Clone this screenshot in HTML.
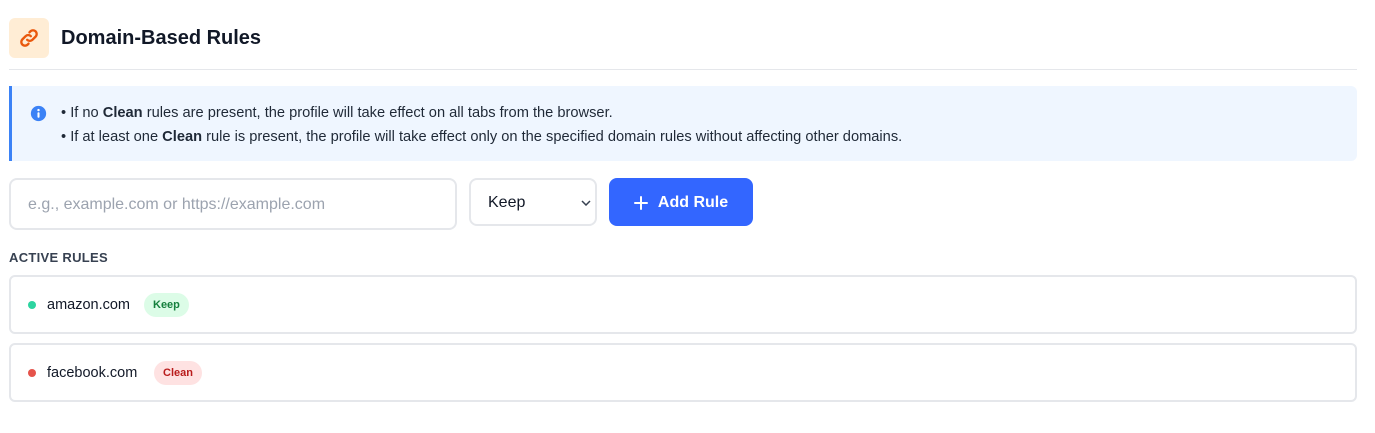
<!DOCTYPE html>
<html><head><style>
*{box-sizing:border-box;margin:0;padding:0}
body{width:1375px;height:433px;background:#fff;font-family:"Liberation Sans",sans-serif;color:#111827;position:relative;overflow:hidden}
.abs{position:absolute}
.icon{left:9px;top:18px;width:40px;height:40px;background:#ffedd5;border-radius:6px;display:flex;align-items:center;justify-content:center}
h1{position:absolute;left:61px;top:27px;font-size:20px;font-weight:bold;color:#111827}
.hr{left:9px;top:69px;width:1348px;height:1px;background:#e5e7eb}
.info{left:9px;top:86px;width:1348px;height:75px;background:#eff6ff;border-left:3px solid #3b82f6;border-radius:0 6px 6px 0}
.info p{position:absolute;left:49px;font-size:14.65px;color:#1f2937}
.inp{left:9px;top:178px;width:448px;height:52px;border:2px solid #e5e7eb;border-radius:8px;font-size:16px;color:#9ca3af;padding:16px 0 0 17px}
.sel{left:469px;top:178px;width:128px;height:48px;border:2px solid #e5e7eb;border-radius:8px;font-size:16px;color:#111827;padding:14px 0 0 17px}
.btn{left:609px;top:178px;width:144px;height:48px;background:#3366ff;border-radius:8px;color:#fff;font-size:16px;font-weight:bold;display:flex;align-items:center;justify-content:center;gap:10px;padding-top:2px}
.lbl{left:9px;top:250px;font-size:13px;font-weight:bold;color:#374151;letter-spacing:.3px}
.row{left:9px;width:1348px;height:59px;border:2px solid #e5e7eb;border-radius:6px}
.dot{position:absolute;left:17px;top:24px;width:8px;height:8px;border-radius:50%}
.dom{position:absolute;left:36px;top:20px;font-size:14.5px;color:#111827}
.badge{position:absolute;top:16px;height:24px;border-radius:12px;font-size:11px;font-weight:bold;padding:6px 9px 0}
</style></head><body>
<div class="abs icon"><svg width="22" height="22" viewBox="0 0 24 24" fill="none" stroke="#ea580c" stroke-width="2.6" stroke-linecap="round"><path d="M10 14a4 4 0 0 0 5.7 0l3.5-3.5a4 4 0 0 0-5.7-5.7l-1 1"/><path d="M14 10a4 4 0 0 0-5.7 0l-3.5 3.5a4 4 0 0 0 5.7 5.7l1-1"/></svg></div>
<h1>Domain-Based Rules</h1>
<div class="abs hr"></div>
<div class="abs info">
<svg class="abs" style="left:18px;top:19px" width="17" height="17" viewBox="0 0 20 20"><circle cx="10" cy="10" r="9" fill="#3b82f6"/><circle cx="10" cy="6" r="1.4" fill="#fff"/><rect x="8.8" y="8.5" width="2.4" height="6.5" rx="1" fill="#fff"/></svg>
<p style="top:19px">• If no <b>Clean</b> rules are present, the profile will take effect on all tabs from the browser.</p>
<p style="top:43px">• If at least one <b>Clean</b> rule is present, the profile will take effect only on the specified domain rules without affecting other domains.</p>
</div>
<div class="abs inp">e.g., example.com or https://example.com</div>
<div class="abs sel">Keep<svg class="abs" style="left:110px;top:20px" width="10" height="6" viewBox="0 0 10 6" fill="none" stroke="#374151" stroke-width="1.5"><path d="M1 1l4 4 4-4"/></svg></div>
<div class="abs btn"><svg width="14" height="14" viewBox="0 0 14 14" stroke="#fff" stroke-width="2" stroke-linecap="round"><path d="M7 1v12M1 7h12"/></svg>Add Rule</div>
<div class="abs lbl">ACTIVE RULES</div>
<div class="abs row" style="top:275px"><span class="dot" style="background:#2dd4a0"></span><span class="dom">amazon.com</span><span class="badge" style="left:133px;background:#dcfce7;color:#15803d">Keep</span></div>
<div class="abs row" style="top:343px"><span class="dot" style="background:#e5534b"></span><span class="dom">facebook.com</span><span class="badge" style="left:143px;background:#fee2e2;color:#b91c1c">Clean</span></div>
</body></html>
